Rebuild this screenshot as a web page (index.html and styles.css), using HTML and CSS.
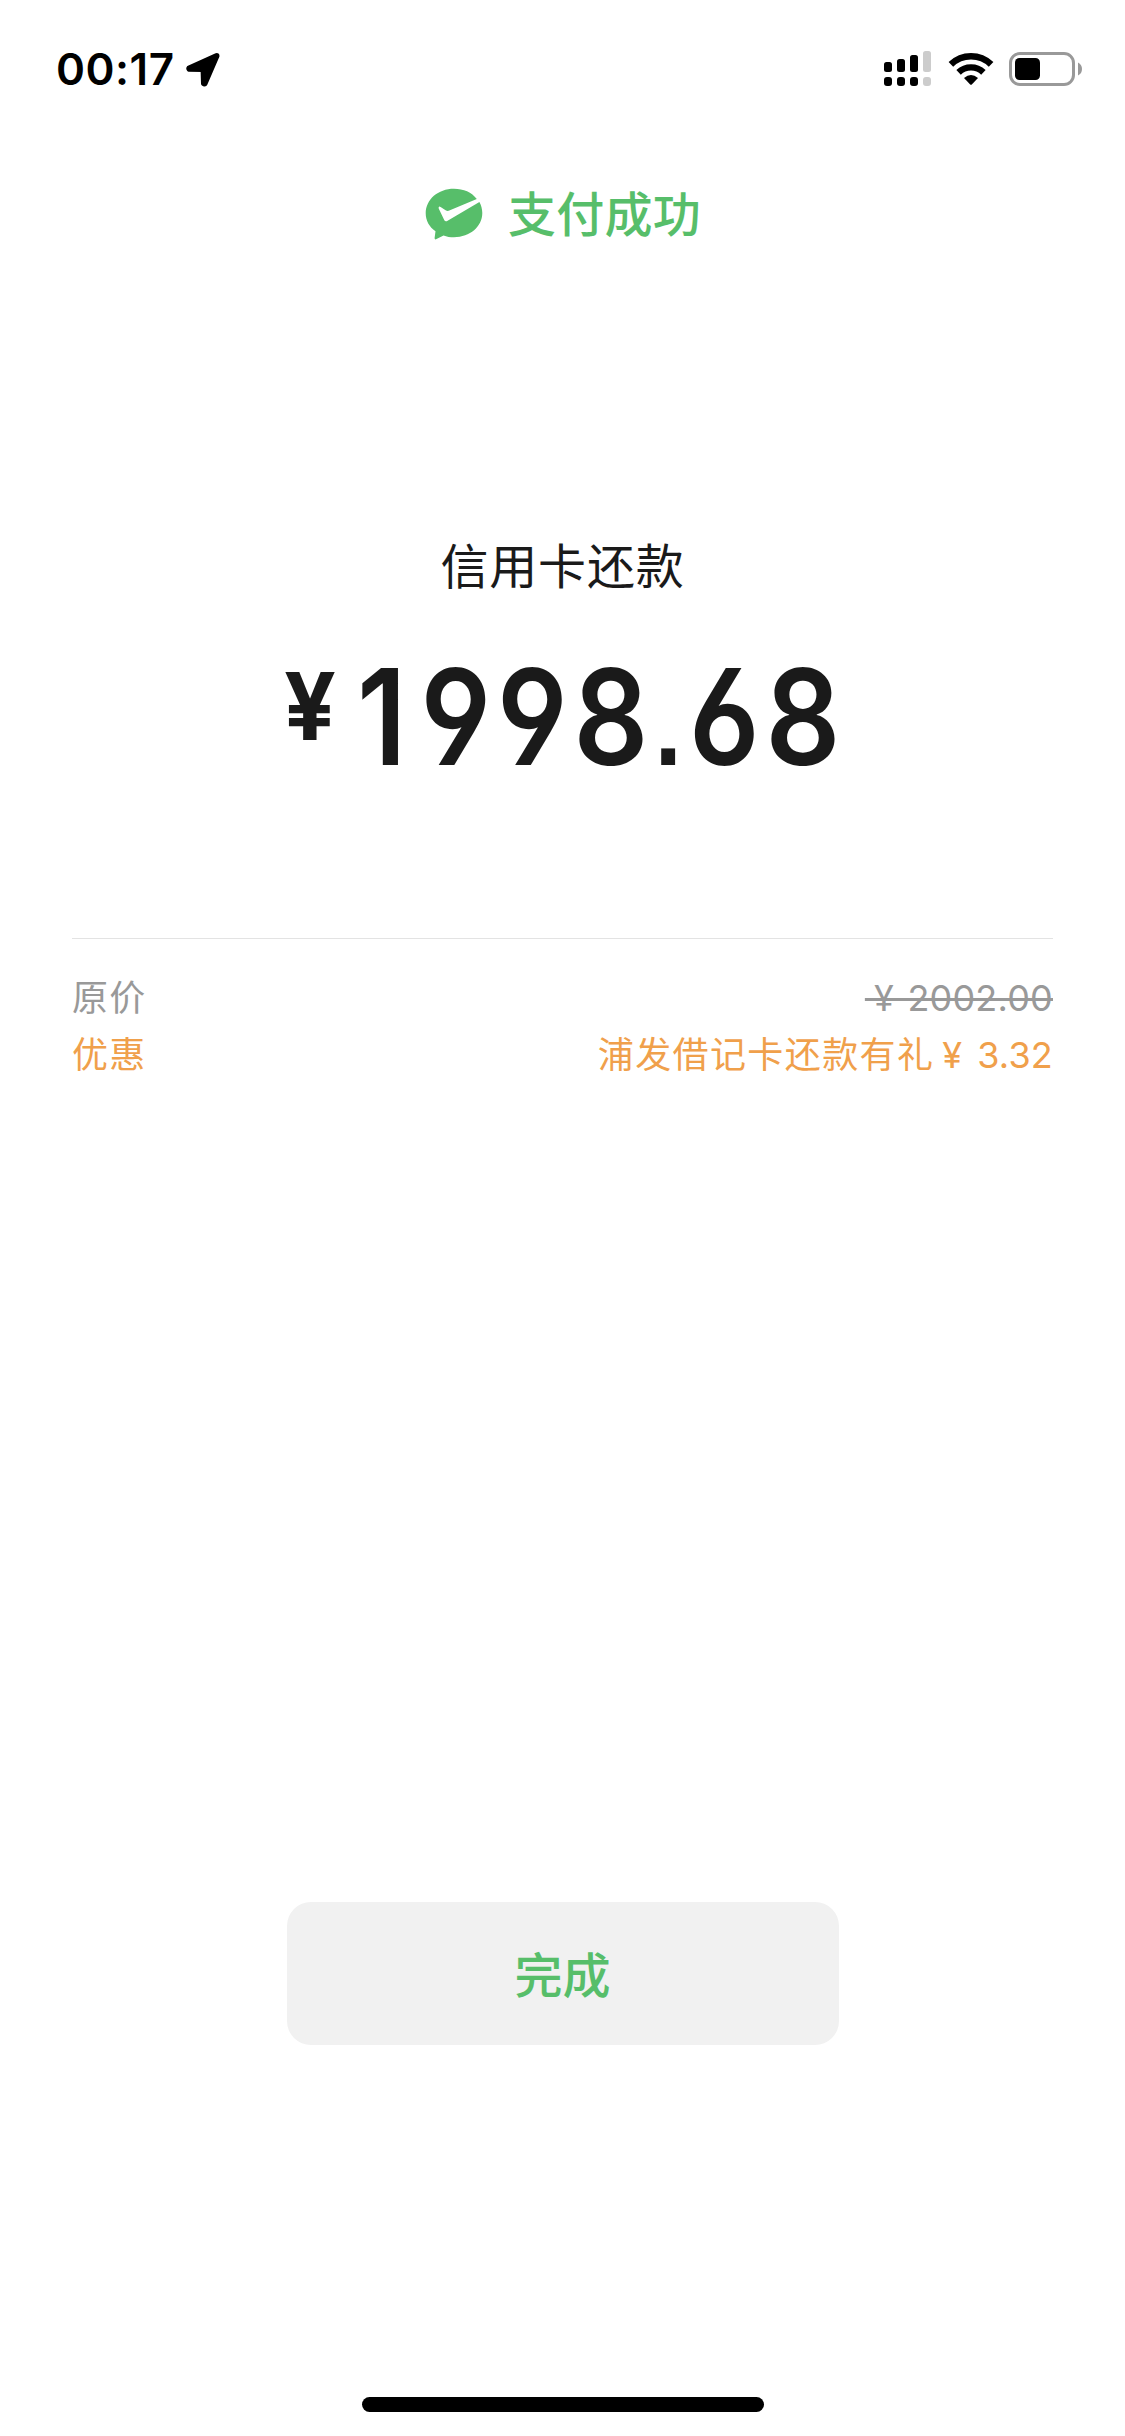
FILE: index.html
```html
<!DOCTYPE html>
<html lang="zh-CN">
<head>
<meta charset="utf-8">
<title>支付成功</title>
<link rel="stylesheet" href="styles.css">
</head>
<body>
<div class="screen">
  <header class="statusbar">
    <span class="clock">00:17</span>
    <svg class="location" width="36" height="36" viewBox="0 0 36 36"><path d="M31.3 2.8 3.6 15.2Q2.4 16.6 3.6 18L17.3 18.4 17.7 31.8Q19.2 33.6 20.6 32.2L32.8 4Q32.8 2.4 31.3 2.8Z" fill="#000" stroke="#000" stroke-width="3.4" stroke-linejoin="round"/></svg>
    <div class="indicators">
      <svg class="signal" width="48" height="36" viewBox="0 0 48 36">
        <rect x="0" y="11" width="8" height="10" rx="2.5"/><rect x="13" y="8" width="8" height="13" rx="2.5"/><rect x="26" y="4" width="8" height="17" rx="2.5"/><rect class="dim" x="39" y="0" width="8" height="21" rx="2.5"/>
        <rect x="0" y="26" width="8" height="9" rx="3"/><rect x="13" y="26" width="8" height="9" rx="3"/><rect x="26" y="26" width="8" height="9" rx="3"/><rect class="dim" x="39" y="26" width="8" height="9" rx="3"/>
      </svg>
      <svg class="wifi" width="46" height="34" viewBox="0 0 46 34">
        <path d="M2.9 12.4A28.9 28.9 0 0 1 43.1 12.4" fill="none" stroke="#000" stroke-width="6.6"/>
        <path d="M10.6 20.4A17.8 17.8 0 0 1 35.4 20.4" fill="none" stroke="#000" stroke-width="6.4"/>
        <path d="M16 26Q23 20 30 26L23.8 32.4Q23 33.2 22.2 32.4Z"/>
      </svg>
      <svg class="battery" width="74" height="34" viewBox="0 0 74 34">
        <rect x="1.5" y="1.5" width="63" height="31" rx="9.5" fill="none" stroke="#999" stroke-width="3"/>
        <rect x="6" y="6" width="25" height="22" rx="4.5"/>
        <path d="M69 10.5Q73 12.5 73 17T69 23.5Z" fill="#999"/>
      </svg>
    </div>
  </header>

  <div class="result">
    <svg width="58" height="53" viewBox="0 0 58 53"><path fill="#57be6a" d="M51.8 11C46.8 4.2 38.5.7 29 .7 13 .7.7 11.5.7 25.2c0 7.3 3.6 13.7 9.8 18.1L9.6 50q0 2 1.900 1.100l7-3.700C21.800 48.600 25.300 49.300 29 49.300 45 49.300 57.300 38.600 57.300 25.100c0-4.200-1.100-7.900-2.900-11.200L22.600 32.800q-2.400 1.400-3.500-1L13.700 20.400q-.5-2.600 1.900-1.400l5 3.300q1.800 1 3.700.3Z"/></svg>
    <h1>支付成功</h1>
  </div>

  <main>
    <p class="payee">信用卡还款</p>
    <div class="amount"><span class="yen">¥</span><span class="value"><span class="lead">1</span>99<span class="unit">8</span><span class="point">.</span>68</span></div>
    <dl class="details">
      <div class="row"><dt>原价</dt><dd class="original">&#8197;¥ 2002.00</dd></div>
      <div class="row discount"><dt>优惠</dt><dd>浦发借记卡还款有礼<span class="saved">¥ 3.32</span></dd></div>
    </dl>
  </main>

  <button class="done">完成</button>
  <div class="home-indicator"></div>
</div>
</body>
</html>
```

FILE: styles.css
```css
* { box-sizing: border-box; }
body, h1, p, dl, dd { margin: 0; }
body { background: #fff; }

.screen {
  width: 1125px;
  height: 2436px;
  display: flex;
  flex-direction: column;
  align-items: center;
  font-family: Inter, "Noto Sans CJK SC", sans-serif;
  color: #1a1a1a;
}
svg { display: block; flex: none; }

.statusbar {
  width: 100%;
  height: 138px;
  padding: 0 42px 0 56px;
  display: flex;
  align-items: center;
  color: #000;
}
.clock { width: 129px; font-size: 44px; font-weight: 600; letter-spacing: 0.5px; white-space: nowrap; }
.location { margin-top: 2px; }
.indicators { margin-left: auto; display: flex; align-items: center; }
.signal .dim { fill: #ccc; }
.wifi { margin-left: 16px; }
.battery { margin-left: 15px; }

.result {
  height: 152px;
  padding-left: 1px;
  display: flex;
  align-items: center;
  gap: 25px;
  color: #57be6a;
}
.result h1 { padding-top: 2px; font-size: 48px; line-height: 72px; font-weight: 500; letter-spacing: 0.3px; }

main { width: 981px; margin-top: 241px; height: 1371px; }
.payee { height: 72px; line-height: 72px; text-align: center; font-size: 48px; letter-spacing: 0.8px; }
.amount {
  height: 230px;
  margin-top: 29px;
  padding-left: 212px;
  display: flex;
  align-items: flex-start;
  font-weight: 600;
  white-space: nowrap;
}
.yen { width: 54px; font-size: 94px; line-height: 148px; font-weight: 700; transform: scaleX(0.97); transform-origin: left; }
.value {
  width: 495px;
  margin-left: 19px;
  font-size: 133px;
  line-height: 170px;
  letter-spacing: 6.6px;
  font-feature-settings: "ss01";
  transform: scaleX(0.88);
  transform-origin: left;
}
.lead { letter-spacing: 16px; }
.unit { letter-spacing: 7px; }
.point { font-family: "Liberation Sans", sans-serif; font-size: 112px; font-weight: 700; letter-spacing: 8px; line-height: 1; }

.details { margin-top: 76px; border-top: 1px solid #e3e3e3; padding-top: 31px; font-size: 36px; }
.row { display: flex; justify-content: space-between; height: 57px; line-height: 57px; color: #999; letter-spacing: 1.2px; }
.discount { color: #f0a04b; }
.discount dd { letter-spacing: 1.4px; }
.original { letter-spacing: 0.2px; word-spacing: 3px; text-decoration: line-through; text-decoration-thickness: 3px; }
.saved { margin-left: 8px; letter-spacing: 0.2px; word-spacing: 4.5px; }

.done {
  width: 552px;
  height: 143px;
  padding: 0 0 4px;
  border: 0;
  border-radius: 24px;
  background: #f1f1f1;
  color: #57be6a;
  font: 500 48px Inter, "Noto Sans CJK SC", sans-serif;
}
.home-indicator { width: 402px; height: 15px; margin-top: auto; margin-bottom: 24px; border-radius: 8px; background: #000; }
```
